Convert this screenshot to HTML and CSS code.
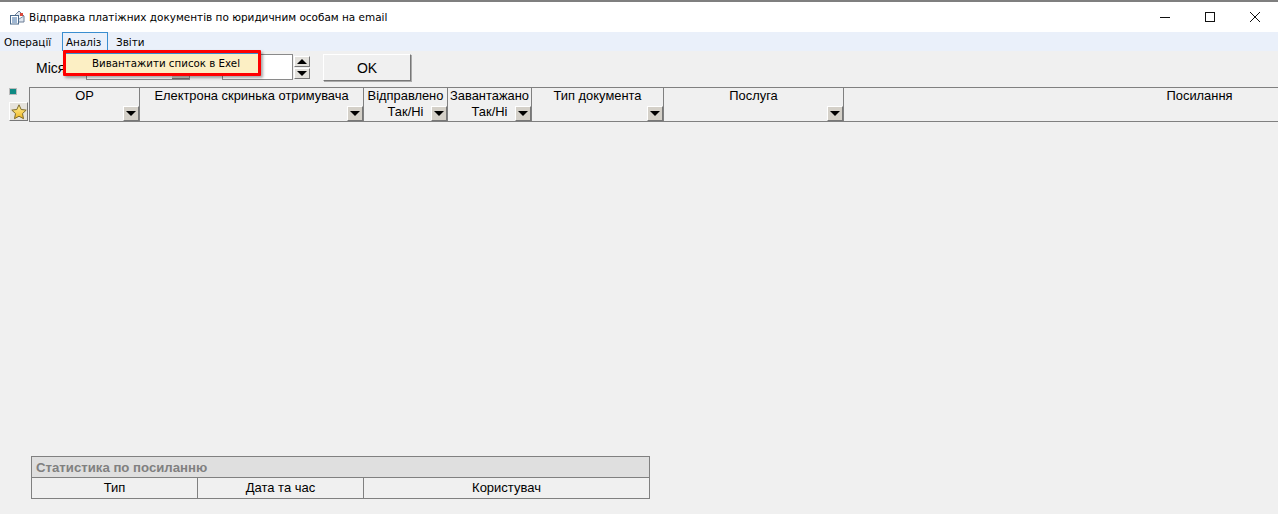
FILE: index.html
```html
<!DOCTYPE html>
<html lang="uk">
<head>
<meta charset="utf-8">
<title>Відправка платіжних документів</title>
<link rel="stylesheet" href="styles.css">
</head>
<body>
<div class="app">
  <header class="titlebar">
    <svg class="appicon" width="16" height="16" viewBox="0 0 16 16">
      <path d="M5 7 10 2l5 5v6H5z" fill="#dfe6ef" stroke="#6d7f96"/>
      <path d="M5 7l5 3 5-3" fill="#fff" stroke="#8396ad"/>
      <rect x="11" y="4" width="3" height="3" fill="#d9483b"/>
      <rect x="1.500" y="6.500" width="8" height="8.500" fill="#fff" stroke="#4a6a8c"/>
      <path d="M3 9h5M3 11h5M3 13h5" stroke="#3f6fa5"/>
    </svg>
    <span class="title">Відправка платіжних документів по юридичним особам на email</span>
    <div class="winbtns">
      <svg width="12" height="12" viewBox="0 0 12 12"><path d="M1 6.500h10" stroke="#111"/></svg>
      <svg width="12" height="12" viewBox="0 0 12 12"><rect x="1.500" y="1.500" width="9" height="9" fill="none" stroke="#111"/></svg>
      <svg width="12" height="12" viewBox="0 0 12 12"><path d="M1 1l10 10M11 1 1 11" stroke="#111" fill="none"/></svg>
    </div>
  </header>
  <nav class="menubar">
    <span class="menuitem first">Операції</span>
    <span class="menuitem active">Аналіз</span>
    <span class="menuitem">Звіти</span>
    <div class="popup"><span class="popup-item">Вивантажити список в Exel</span></div>
  </nav>
  <main class="content">
    <div class="toolbar">
      <span class="label">Місяць</span>
      <div class="combo"><span class="combo-btn"></span></div>
      <div class="spin">
        <div class="spin-input"></div>
        <div class="spin-btns">
          <span class="spin-btn"><i class="arrow up"></i></span>
          <span class="spin-btn"><i class="arrow"></i></span>
        </div>
      </div>
      <button class="ok" type="button">OK</button>
    </div>
    <div class="gridarea">
      <div class="gutter">
        <span class="marker"></span>
        <span class="starbtn">
          <svg width="16" height="16" viewBox="0 0 16 16">
            <defs><linearGradient id="gold" x1="0" y1="0" x2="0" y2="1"><stop offset="0" stop-color="#fff4a0"/><stop offset="1" stop-color="#f2b51c"/></linearGradient></defs>
            <path d="M8 .8l2.200 4.700 5 .6-3.700 3.500 1 5.100L8 12.200l-4.500 2.500 1-5.100L.8 6.100l5-.6z" fill="url(#gold)" stroke="#7d6a2a"/>
          </svg>
        </span>
      </div>
      <div class="gridhead">
        <div class="col c1"><span>ОР</span><span class="drop"><i class="arrow"></i></span></div>
        <div class="col c2"><span>Електрона скринька отримувача</span><span class="drop"><i class="arrow"></i></span></div>
        <div class="col c3"><span>Відправлено</span><span>Так/Ні</span><span class="drop"><i class="arrow"></i></span></div>
        <div class="col c3"><span>Завантажано</span><span>Так/Ні</span><span class="drop"><i class="arrow"></i></span></div>
        <div class="col c4"><span>Тип документа</span><span class="drop"><i class="arrow"></i></span></div>
        <div class="col c5"><span>Послуга</span><span class="drop"><i class="arrow"></i></span></div>
        <div class="col c6"><span>Посилання</span></div>
      </div>
    </div>
    <section class="stats">
      <div class="stats-title">Статистика по посиланню</div>
      <div class="stats-row">
        <span class="s1">Тип</span>
        <span class="s1">Дата та час</span>
        <span class="s2">Користувач</span>
      </div>
    </section>
  </main>
</div>
</body>
</html>
```
FILE: styles.css
```css
* { box-sizing: border-box; }
html, body { margin: 0; height: 100%; }
body { background: #f0f0f0; color: #000; font-family: "Liberation Sans", Arial, sans-serif; font-size: 12.900px; overflow: hidden; }
.app { height: 514px; display: flex; flex-direction: column; }

.titlebar { height: 32px; flex: none; background: #fff; border-top: 2px solid #7f7f7f; display: flex; align-items: center; padding: 0 0 0 9px; }
.appicon { flex: none; margin-right: 4px; }
.title { font-family: "DejaVu Sans", sans-serif; font-size: 10.460px; white-space: nowrap; }
.winbtns { margin-left: auto; display: flex; gap: 33px; padding-right: 17px; align-items: center; }

.menubar { height: 19px; flex: none; background: #eaf0fa; display: flex; position: relative; z-index: 2; font-family: "DejaVu Sans", sans-serif; font-size: 10.400px; }
.menuitem { padding: 0 3px; height: 19px; line-height: 18px; border: 1px solid transparent; }
.menuitem.first { padding: 0 3px; width: 62px; }
.menuitem.active { border-color: #3a8ed0; border-bottom: 0; width: 46px; margin-right: 4px; }
.popup { position: absolute; left: 63px; top: 18px; width: 198px; height: 26px; border: 3px solid #f00; border-radius: 1px; box-shadow: 2px 2px 3px rgba(0,0,0,.35); background: #fcefc4; color: #000; }
.popup-item { display: block; border-top: 1px solid #3a8ed0; height: 20px; line-height: 19px; padding-left: 26px; white-space: nowrap; font-size: 10.280px; }

.content { flex: 1; display: flex; flex-direction: column; }
.toolbar { height: 36px; flex: none; display: flex; align-items: flex-start; position: relative; }
.label { font-size: 14px; margin: 9px 0 0 36px; width: 50px; overflow: hidden; white-space: nowrap; }
.combo { width: 104px; height: 26px; margin-top: 3px; background: #fff; border: 1px solid #8a8a8a; display: flex; justify-content: flex-end; align-items: flex-end; }
.combo-btn { width: 17px; height: 20px; background: #d4d0c8; border-bottom: 1px solid #777; }
.spin { display: flex; margin: 3px 0 0 32px; }
.spin-input { width: 71px; height: 26px; background: #fff; border: 1px solid #8a8a8a; }
.spin-btns { display: flex; flex-direction: column; margin-left: 1px; padding-top: 2px; gap: 1px; }
.spin-btn { width: 16px; height: 11px; background: #e3e1dc; border: 1px solid; border-color: #fff #777 #777 #fff; display: flex; align-items: center; justify-content: center; }
.ok { width: 88px; height: 27px; margin: 3px 0 0 13px; padding: 0; background: #f0f0f0; border: 1px solid; border-color: #fff #777 #777 #fff; box-shadow: 1px 1px 0 #aaa; font: 14px "Liberation Sans", sans-serif; color: #000; }

.arrow { display: block; width: 0; height: 0; border-left: 5px solid transparent; border-right: 5px solid transparent; border-top: 5px solid #000; }
.arrow.up { border-top: 0; border-bottom: 5px solid #000; }

.gridarea { height: 35px; flex: none; display: flex; }
.gutter { width: 29px; flex: none; display: flex; flex-direction: column; align-items: flex-start; padding: 0 0 0 9px; }
.marker { width: 8px; height: 7px; background: #0e8a84; border: 1px solid #bbb; margin-top: 1px; }
.starbtn { width: 19px; height: 19px; margin-top: 7px; background: #e6e3dc; border: 1px solid; border-color: #fff #777 #777 #fff; display: flex; align-items: center; justify-content: center; }
.gridhead { flex: 1; display: flex; border-top: 1px solid #808080; border-bottom: 1px solid #808080; border-left: 1px solid #808080; height: 35px; }
.col { position: relative; display: flex; flex-direction: column; align-items: center; border-right: 1px solid #808080; line-height: 16px; white-space: nowrap; }
.c1 { width: 110px; }
.c2 { width: 224px; }
.c3 { width: 84px; }
.c4 { width: 132px; }
.c5 { width: 180px; }
.c6 { flex: 1; border-right: 0; padding-left: 277px; }
.drop { position: absolute; right: 0; bottom: 0; width: 16px; height: 15px; background: #d4d0c8; border: 1px solid; border-color: #fff #777 #777 #fff; display: flex; align-items: center; justify-content: center; }

.stats { margin: 334px 0 0 31px; width: 619px; height: 43px; border: 1px solid #808080; }
.stats-title { height: 21px; background: #dfdfdf; border-bottom: 1px solid #808080; padding-left: 4px; font-size: 13.200px; font-weight: bold; color: #808080; line-height: 21px; }
.stats-row { display: flex; height: 20px; line-height: 20px; font-size: 13px; }
.s1 { width: 166px; text-align: center; border-right: 1px solid #808080; }
.s2 { flex: 1; text-align: center; }
```
